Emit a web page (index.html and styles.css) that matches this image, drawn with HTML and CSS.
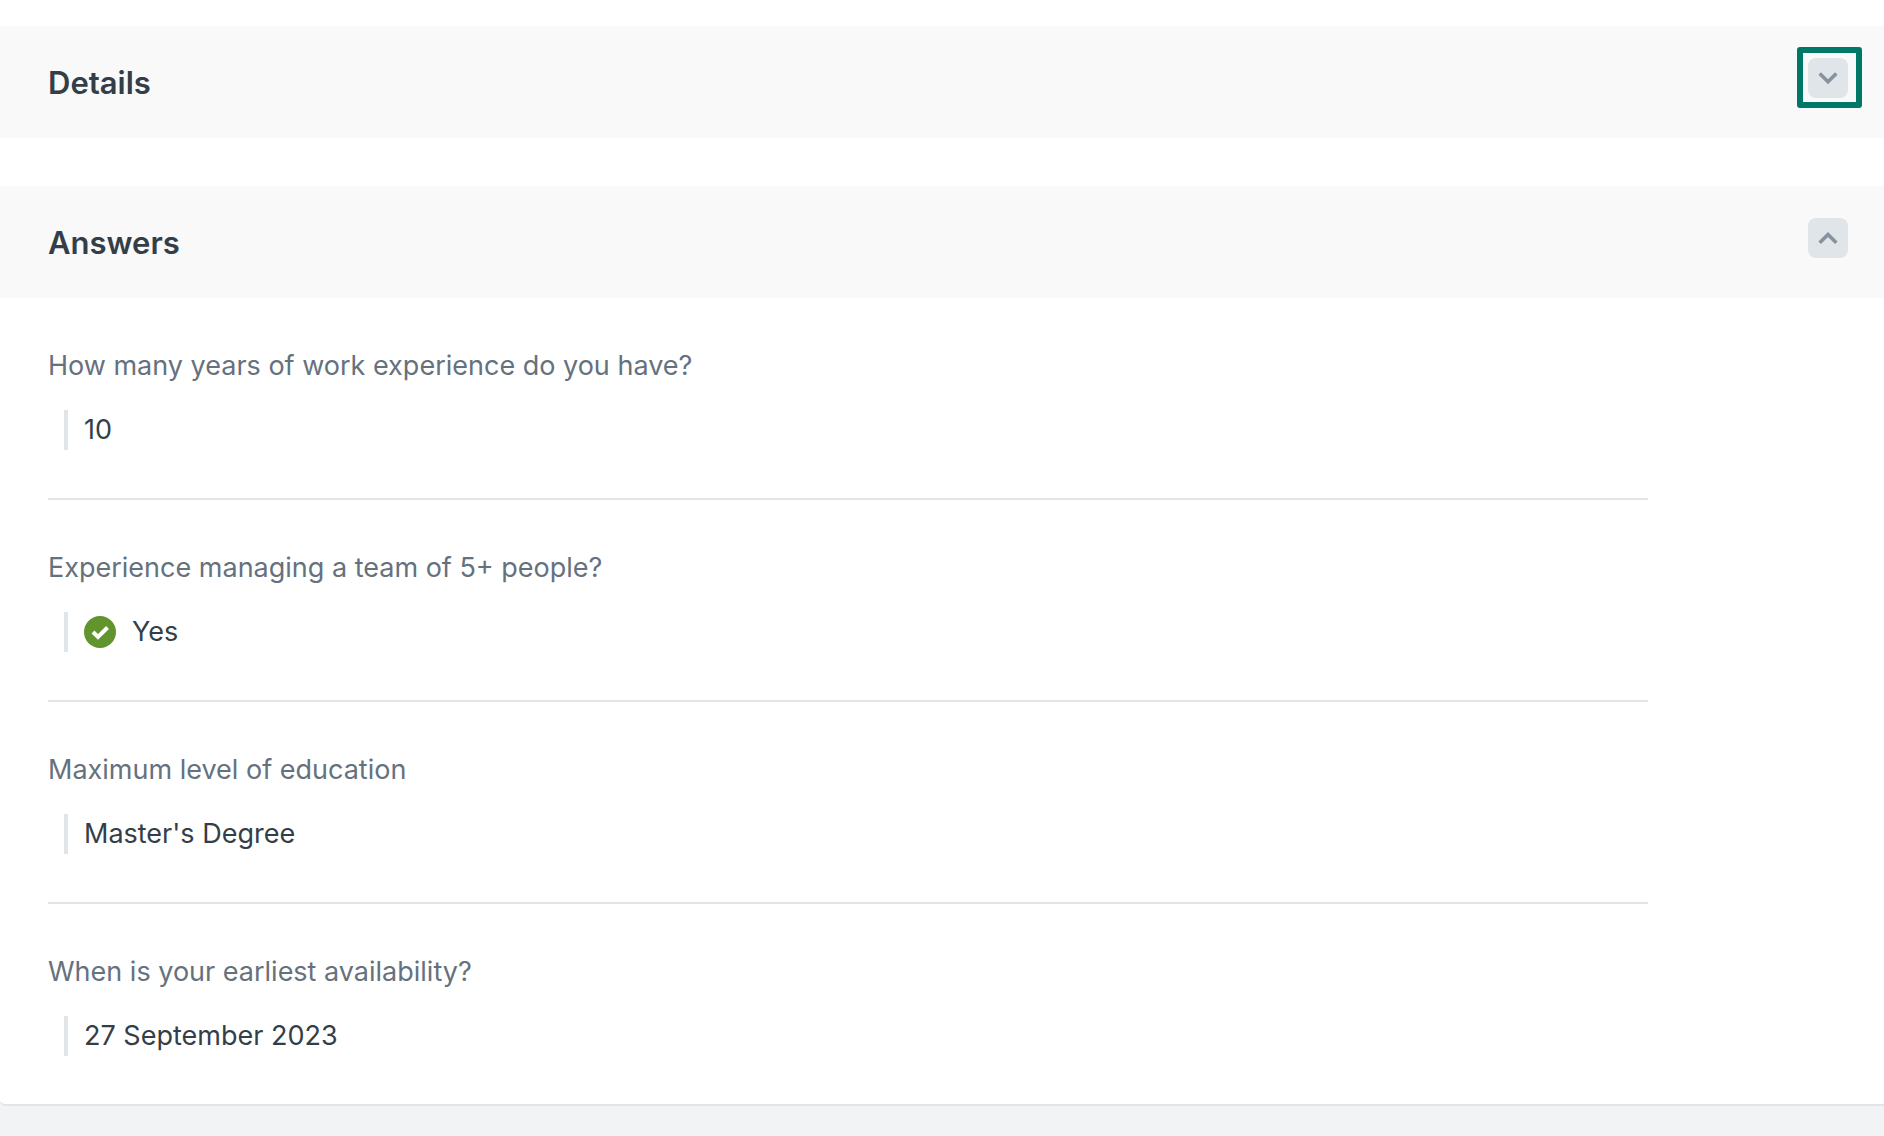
FILE: index.html
```html
<!DOCTYPE html>
<html lang="en">

<head>
    <meta charset="UTF-8">
    <meta name="viewport" content="width=device-width, initial-scale=1.0">
    <title>Answers</title>
    <link rel="stylesheet" href="styles.css">
</head>

<body>
    <main class="card">
        <section>
            <header class="section-header">
                <h2>Details</h2>
                <button type="button" class="toggle highlight" aria-label="Expand details" aria-expanded="false">
                    <svg viewBox="0 0 40 40"><path d="M11.700 15.500l8.300 8.300 8.300-8.300" /></svg>
                </button>
            </header>
        </section>
        <section>
            <header class="section-header">
                <h2>Answers</h2>
                <button type="button" class="toggle" aria-label="Collapse answers" aria-expanded="true">
                    <svg viewBox="0 0 40 40"><path d="M11.700 24.800l8.300-8.300 8.300 8.300" /></svg>
                </button>
            </header>
            <dl class="answers">
                <div class="item">
                    <dt>How many years of work experience do you have?</dt>
                    <dd>10</dd>
                </div>
                <div class="item">
                    <dt>Experience managing a team of 5+ people?</dt>
                    <dd>
                        <svg class="check" viewBox="0 0 32 32">
                            <circle cx="16" cy="16" r="16" />
                            <path d="M9 16l5 5 9.500-9.500" />
                        </svg>
                        Yes
                    </dd>
                </div>
                <div class="item">
                    <dt>Maximum level of education</dt>
                    <dd>Master's Degree</dd>
                </div>
                <div class="item">
                    <dt>When is your earliest availability?</dt>
                    <dd>27 September 2023</dd>
                </div>
            </dl>
        </section>
    </main>
</body>

</html>
```

FILE: styles.css
```css
* {
    padding: 0;
    margin: 0;
    box-sizing: border-box;
}

body {
    background: #f2f3f5;
    color: #333e49;
    font-family: Inter, "Liberation Sans", sans-serif;
    font-size: 27px;
    line-height: 40px;
}

.card {
    display: flex;
    flex-direction: column;
    gap: 48px;
    padding-top: 26px;
    background: #fff;
    border-bottom: 2px solid #dfe5e9;
    border-radius: 0 0 0 6px;
}

.section-header {
    display: flex;
    justify-content: space-between;
    align-items: flex-start;
    padding: 32px 36px 30px 48px;
    background: #f9f9f9;
}

.section-header h2 {
    font-size: 31px;
    font-weight: 600;
    line-height: 50px;
}

.toggle {
    position: relative;
    width: 40px;
    height: 40px;
    border: 0;
    border-radius: 8px;
    background: #dfe5e9;
    cursor: pointer;
}

.toggle svg {
    display: block;
    width: 40px;
    height: 40px;
    fill: none;
    stroke: #87929f;
    stroke-width: 3.6;
}

/* green frame around the button */
.highlight::after {
    content: "";
    position: absolute;
    inset: -11px -14px -10px -11px;
    border: 6px solid #007867;
    border-radius: 3px;
}

.answers {
    max-width: 1648px;
    padding-left: 48px;
}

.item {
    padding: 48px 0;
    border-bottom: 2px solid #dfe5e9;
}

.item:last-child {
    border-bottom: 0;
}

.item dt {
    margin-bottom: 24px;
    color: #66717e;
}

.item dd {
    display: flex;
    align-items: center;
    gap: 16px;
    margin-left: 16px;
    padding-left: 16px;
    border-left: 4px solid #dfe5e9;
}

.check {
    width: 32px;
    height: 32px;
    fill: #62942e;
}

.check path {
    fill: none;
    stroke: #fff;
    stroke-width: 4;
}
```
